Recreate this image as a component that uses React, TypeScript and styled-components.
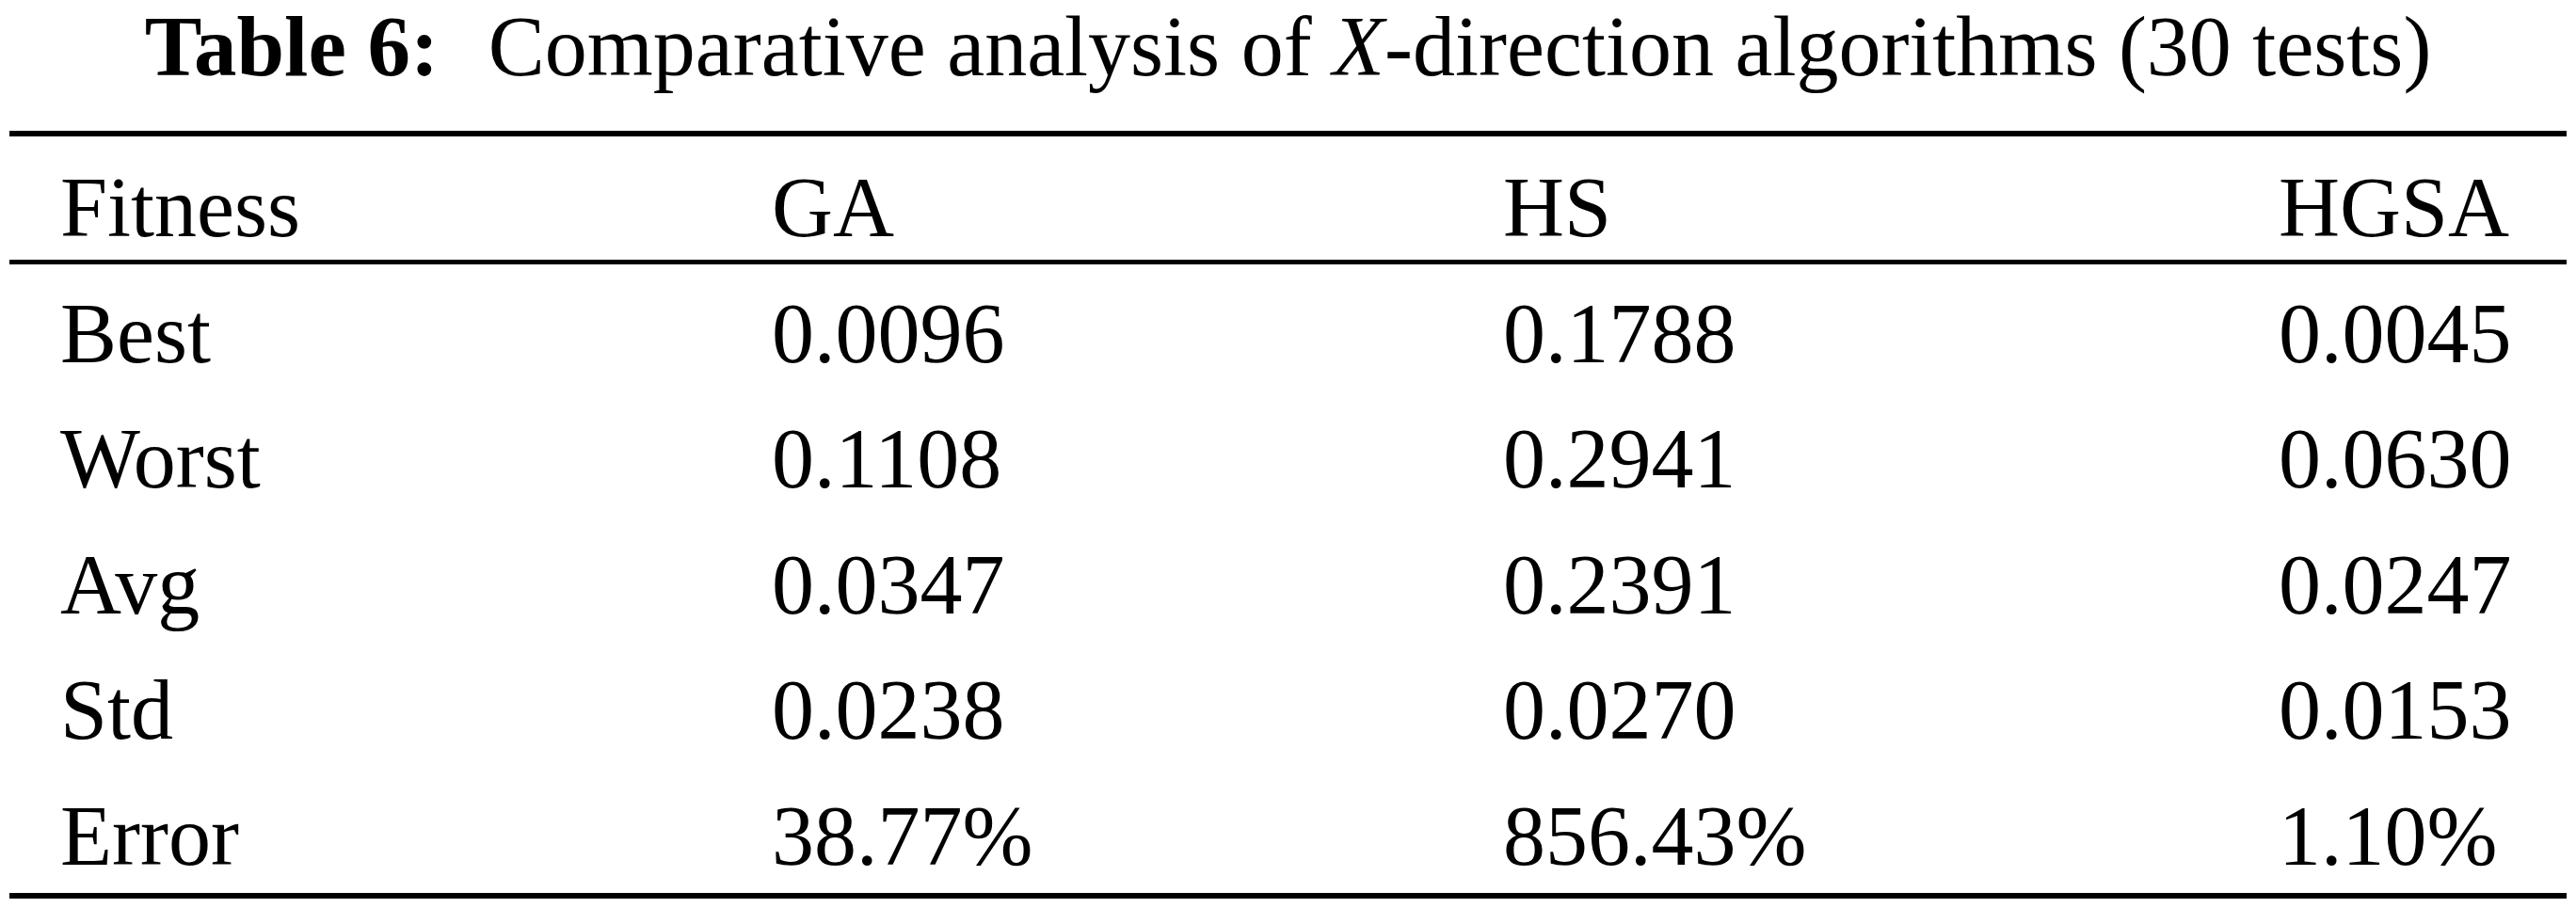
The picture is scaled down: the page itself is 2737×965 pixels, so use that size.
import styled, { createGlobalStyle } from 'styled-components';

const GlobalStyle = createGlobalStyle`
  html, body {
    margin: 0;
    padding: 0;
    background: #ffffff;
  }
  body {
    font-family: "Liberation Serif", "Times New Roman", serif;
    color: #000000;
  }
`;

const Page = styled.div`
  width: 2737px;
  height: 965px;
  overflow: hidden;
  background: #ffffff;
`;

const Caption = styled.div`
  font-size: 90px;
  line-height: 91px;
  padding-top: 4px;
  text-align: center;
  white-space: nowrap;
  margin-bottom: 44px;
`;

const CaptionLabel = styled.b`
  font-weight: 700;
  font-size: 91px;
  margin-right: 30px;
`;

const Table = styled.div`
  margin: 0 10px 0 10px;
`;

const Rule = styled.div<{ $thick: number }>`
  height: ${(p) => p.$thick}px;
  background: #000000;
`;

const Row = styled.div<{ $head?: boolean }>`
  display: grid;
  grid-template-columns: 756px 777px 824px 1fr;
  padding-left: 54px;
  font-size: 90px;
  line-height: 90px;
  height: ${(p) => (p.$head ? '131px' : '133.5px')};
  padding-top: ${(p) => (p.$head ? '31px' : '28.6px')};
  box-sizing: border-box;
  white-space: nowrap;
`;

const Cell = styled.div`
  text-align: left;
`;

const Body = styled.div`
  padding-bottom: 0.5px;
`;

const header = ['Fitness', 'GA', 'HS', 'HGSA'];

const rows: string[][] = [
  ['Best', '0.0096', '0.1788', '0.0045'],
  ['Worst', '0.1108', '0.2941', '0.0630'],
  ['Avg', '0.0347', '0.2391', '0.0247'],
  ['Std', '0.0238', '0.0270', '0.0153'],
  ['Error', '38.77%', '856.43%', '1.10%'],
];

function App() {
  return (
    <Page>
      <GlobalStyle />
      <Caption>
        <CaptionLabel>Table 6:</CaptionLabel> Comparative analysis of <i>X</i>-direction algorithms (30 tests)
      </Caption>
      <Table>
        <Rule $thick={6} />
        <Row $head>
          {header.map((h) => (
            <Cell key={h}>{h}</Cell>
          ))}
        </Row>
        <Rule $thick={5} />
        <Body>
          {rows.map((r) => (
            <Row key={r[0]}>
              {r.map((c, i) => (
                <Cell key={i}>{c}</Cell>
              ))}
            </Row>
          ))}
        </Body>
        <Rule $thick={6} />
      </Table>
    </Page>
  );
}

export default App;
